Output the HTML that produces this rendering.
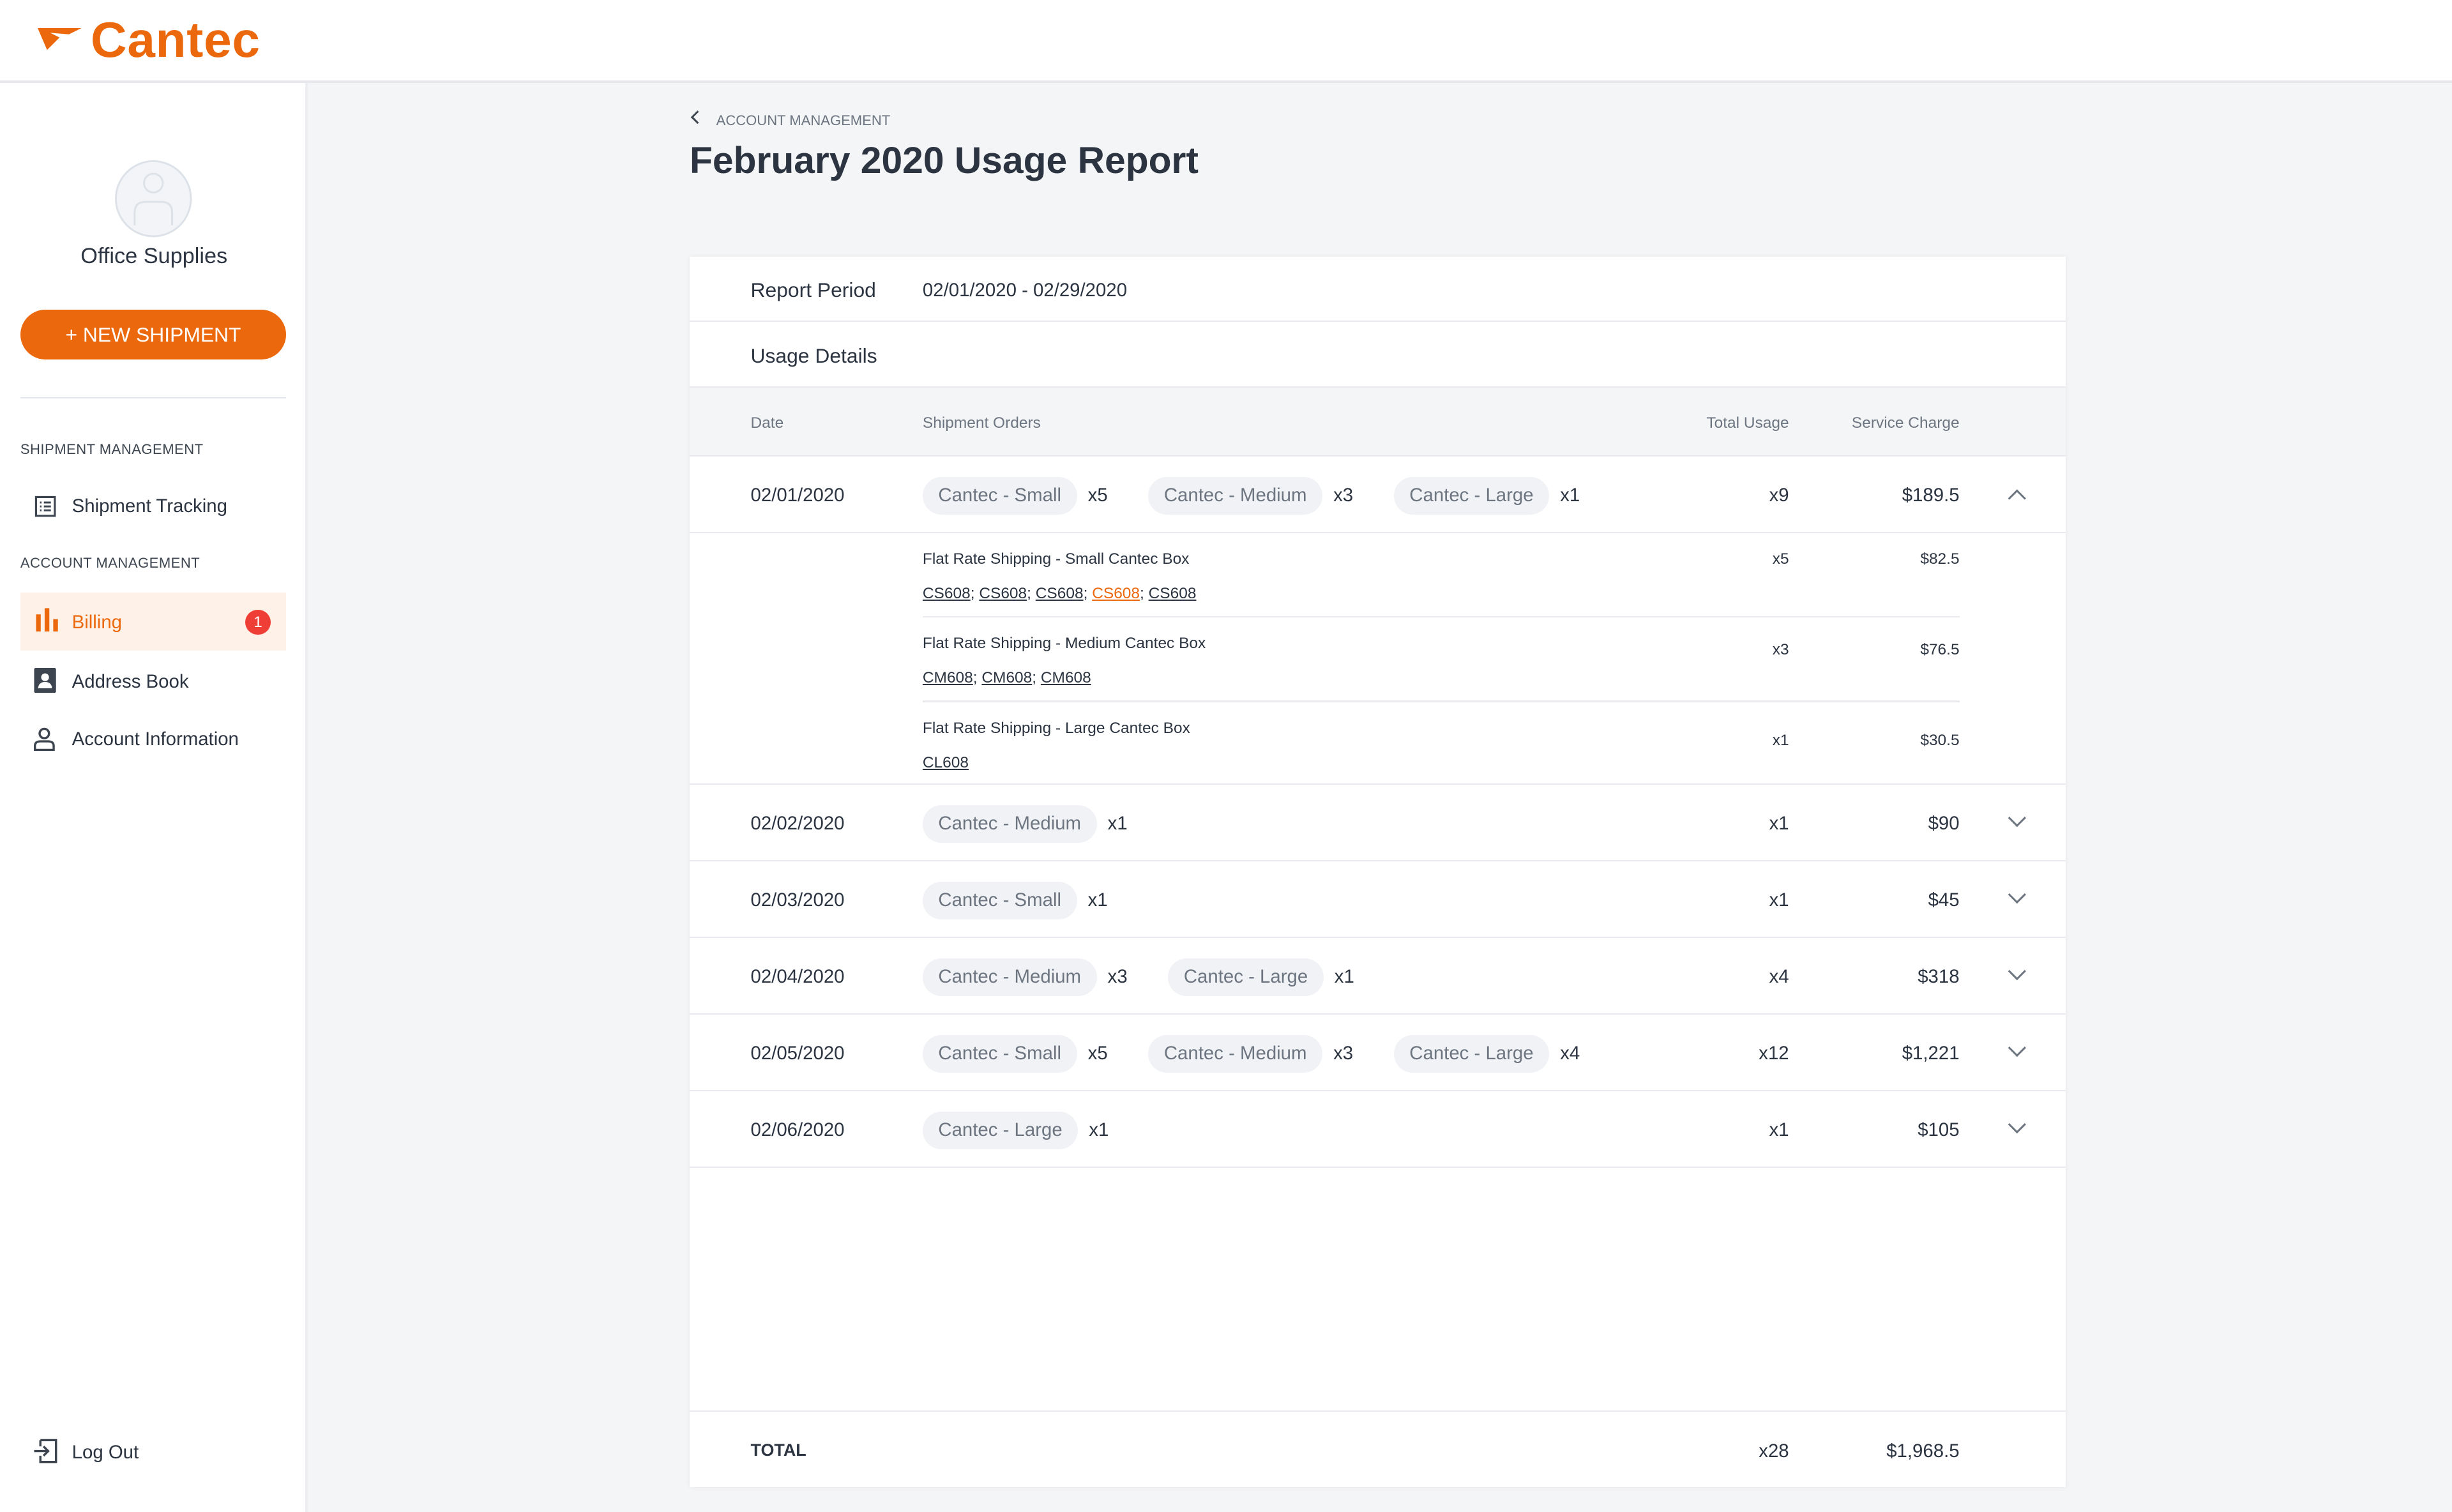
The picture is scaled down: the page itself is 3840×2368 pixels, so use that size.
<!DOCTYPE html>
<html><head><meta charset="utf-8"><style>
*{box-sizing:border-box;margin:0;padding:0}
html,body{width:3840px;height:2368px;overflow:hidden}
body{background:#f4f5f7;font-family:"Liberation Sans",sans-serif;color:#2b3440}
#root{zoom:2.449;width:1568px;height:967px;position:relative}
.hdr{position:absolute;left:0;top:0;width:1568px;height:53px;background:#fff;border-bottom:2px solid #e6e8ec}
.logo{position:absolute;left:58px;top:7px;font-size:32px;font-weight:bold;color:#ec680c;letter-spacing:0.3px}
.side{position:absolute;left:0;top:53px;width:197px;height:914px;background:#fff;border-right:2px solid #eceef1}
.abs{position:absolute}
.btn{left:13px;top:198px;width:170px;height:32px;border-radius:16px;background:#ec680c;color:#fff;font-size:13px;text-align:center;line-height:32px}
.sec{font-size:9px;color:#3d4650;left:13px;letter-spacing:.2px}
.nav{left:46px;font-size:12px;color:#2b3440}
.card{position:absolute;left:441px;top:164px;width:880px;height:787px;background:#fff;box-shadow:0 0 3px rgba(0,0,0,.06)}
.r{position:absolute;left:0;width:880px;border-bottom:1px solid #e8eaee}
.t{position:absolute;font-size:12px;white-space:nowrap}
.pill{display:inline-block;background:#f1f2f5;color:#6c7580;border-radius:12px;padding:0 10px;height:24px;line-height:24px;font-size:12px;margin-right:7px}
.q{display:inline-block;font-size:12px;margin-right:26px}
.rt{text-align:right}
.chev{position:absolute;left:845px;width:8px;height:8px;border-right:1.5px solid #6c7580;border-bottom:1.5px solid #6c7580;transform:rotate(45deg)}
.u{text-decoration:underline;font-size:10px}
.sm{font-size:10px}
</style></head><body><div id="root">
<div class="hdr">
<svg class="abs" style="left:24px;top:18px" width="30" height="16" viewBox="0 0 30 16"><path d="M0 0H28L20 4L8 3L14 6L6 14Z" fill="#ec680c"/></svg>
<div class="logo">Cantec</div></div>
<div class="side"></div>
<svg class="abs" style="left:73px;top:102px" width="50" height="50" viewBox="0 0 50 50"><circle cx="25" cy="25" r="24" fill="#f2f4f7" stroke="#dde2e8" stroke-width="1.2"/><circle cx="25" cy="15" r="6" fill="none" stroke="#dde2e8" stroke-width="1.2"/><path d="M13 42V34Q13 27 20 27H30Q37 27 37 34V42" fill="none" stroke="#dde2e8" stroke-width="1.2"/></svg>
<div class="abs" style="left:0;width:197px;top:156px;text-align:center;font-size:14px">Office Supplies</div>
<div class="abs btn">+ NEW SHIPMENT</div>
<div class="abs" style="left:13px;top:254px;width:170px;height:1px;background:#e3e6ea"></div>
<div class="abs sec" style="top:282px">SHIPMENT MANAGEMENT</div>
<svg class="abs" style="left:22px;top:317px" width="14" height="14" viewBox="0 0 14 14"><rect x="1" y="1" width="12" height="12" fill="none" stroke="#3d4650" stroke-width="1.3"/><path d="M3.5 4.5h1M6 4.5h4.5M3.5 7h1M6 7h4.5M3.5 9.5h1M6 9.5h4.5" stroke="#3d4650" stroke-width="1.2"/></svg>
<div class="abs nav" style="top:317px">Shipment Tracking</div>
<div class="abs sec" style="top:355px">ACCOUNT MANAGEMENT</div>
<div class="abs" style="left:13px;top:379px;width:170px;height:37px;background:#fdf1e8"></div>
<svg class="abs" style="left:22px;top:388px" width="16" height="16" viewBox="0 0 16 16"><rect x="1" y="5" width="3" height="11" fill="#ec680c"/><rect x="6.5" y="1" width="3" height="15" fill="#ec680c"/><rect x="12" y="8" width="3" height="8" fill="#ec680c"/></svg>
<div class="abs nav" style="top:391px;color:#ec680c">Billing</div>
<div class="abs" style="left:157px;top:390px;width:16px;height:16px;border-radius:8px;background:#ef3e36;color:#fff;font-size:10px;text-align:center;line-height:16px">1</div>
<svg class="abs" style="left:21px;top:427px" width="16" height="16" viewBox="0 0 16 16"><rect x="1" y="0" width="14" height="16" rx="1" fill="#3d4650"/><circle cx="8" cy="6" r="2.5" fill="#fff"/><path d="M3.5 13Q4 9 8 9Q12 9 12.5 13Z" fill="#fff"/></svg>
<div class="abs nav" style="top:429px">Address Book</div>
<svg class="abs" style="left:21px;top:465px" width="15" height="15" viewBox="0 0 15 15"><circle cx="7.5" cy="4" r="3" fill="none" stroke="#3d4650" stroke-width="1.4"/><path d="M1.5 14.5V12Q1.5 9 5 9H10Q13.5 9 13.5 12V14.5Z" fill="none" stroke="#3d4650" stroke-width="1.4"/></svg>
<div class="abs nav" style="top:466px">Account Information</div>
<svg class="abs" style="left:21px;top:920px" width="16" height="16" viewBox="0 0 16 16"><path d="M5 1H15V15H5V11M5 5V1" fill="none" stroke="#3d4650" stroke-width="1.4"/><path d="M1 8H10M7 5L10 8L7 11" fill="none" stroke="#3d4650" stroke-width="1.4"/></svg>
<div class="abs nav" style="top:922px">Log Out</div>

<div class="abs" style="left:443px;top:72px;width:6px;height:6px;border-left:1.5px solid #3d4650;border-bottom:1.5px solid #3d4650;transform:rotate(45deg)"></div>
<div class="abs" style="left:458px;top:72px;font-size:9px;color:#6c7580">ACCOUNT MANAGEMENT</div>
<div class="abs" style="left:441px;top:89px;font-size:24px;font-weight:bold;color:#2b3440">February 2020 Usage Report</div>

<div class="card">
<div class="r" style="top:0;height:42px"><div class="t" style="left:39px;top:14px;font-size:13px">Report Period</div><div class="t" style="left:149px;top:15px">02/01/2020 - 02/29/2020</div></div>
<div class="r" style="top:42px;height:42px"><div class="t" style="left:39px;top:14px;font-size:13px">Usage Details</div></div>
<div class="r" style="top:84px;height:44px;background:#f4f5f7"><div class="t sm" style="left:39px;top:17px;color:#6c7580">Date</div><div class="t sm" style="left:149px;top:17px;color:#6c7580">Shipment Orders</div><div class="t sm rt" style="right:177px;top:17px;color:#6c7580">Total Usage</div><div class="t sm rt" style="right:68px;top:17px;color:#6c7580">Service Charge</div></div>

<div class="r" style="top:128px;height:49px">
<div class="t" style="left:39px;top:18px">02/01/2020</div>
<div class="t" style="left:149px;top:13px"><span class="pill">Cantec - Small</span><span class="q">x5</span><span class="pill">Cantec - Medium</span><span class="q">x3</span><span class="pill">Cantec - Large</span><span class="q">x1</span></div>
<div class="t rt" style="right:177px;top:18px">x9</div><div class="t rt" style="right:68px;top:18px">$189.5</div>
<div class="chev" style="top:23px;transform:rotate(-135deg)"></div></div>

<div class="r" style="top:177px;height:161px">
<div class="t sm" style="left:149px;top:11px">Flat Rate Shipping - Small Cantec Box</div>
<div class="t" style="left:149px;top:31px"><span class="u">CS608</span><span class="sm">; </span><span class="u">CS608</span><span class="sm">; </span><span class="u">CS608</span><span class="sm">; </span><span class="u" style="color:#ec680c">CS608</span><span class="sm">; </span><span class="u">CS608</span></div>
<div class="t sm rt" style="right:177px;top:11px">x5</div><div class="t sm rt" style="right:68px;top:11px">$82.5</div>
<div class="abs" style="left:149px;top:53px;width:663px;height:1px;background:#e8eaee"></div>
<div class="t sm" style="left:149px;top:65px">Flat Rate Shipping - Medium Cantec Box</div>
<div class="t" style="left:149px;top:85px"><span class="u">CM608</span><span class="sm">; </span><span class="u">CM608</span><span class="sm">; </span><span class="u">CM608</span></div>
<div class="t sm rt" style="right:177px;top:69px">x3</div><div class="t sm rt" style="right:68px;top:69px">$76.5</div>
<div class="abs" style="left:149px;top:107px;width:663px;height:1px;background:#e8eaee"></div>
<div class="t sm" style="left:149px;top:119px">Flat Rate Shipping - Large Cantec Box</div>
<div class="t" style="left:149px;top:139px"><span class="u">CL608</span></div>
<div class="t sm rt" style="right:177px;top:127px">x1</div><div class="t sm rt" style="right:68px;top:127px">$30.5</div>
</div>

<div class="r" style="top:338px;height:49px"><div class="t" style="left:39px;top:18px">02/02/2020</div><div class="t" style="left:149px;top:13px"><span class="pill">Cantec - Medium</span><span class="q">x1</span></div><div class="t rt" style="right:177px;top:18px">x1</div><div class="t rt" style="right:68px;top:18px">$90</div><div class="chev" style="top:17px"></div></div>
<div class="r" style="top:387px;height:49px"><div class="t" style="left:39px;top:18px">02/03/2020</div><div class="t" style="left:149px;top:13px"><span class="pill">Cantec - Small</span><span class="q">x1</span></div><div class="t rt" style="right:177px;top:18px">x1</div><div class="t rt" style="right:68px;top:18px">$45</div><div class="chev" style="top:17px"></div></div>
<div class="r" style="top:436px;height:49px"><div class="t" style="left:39px;top:18px">02/04/2020</div><div class="t" style="left:149px;top:13px"><span class="pill">Cantec - Medium</span><span class="q">x3</span><span class="pill">Cantec - Large</span><span class="q">x1</span></div><div class="t rt" style="right:177px;top:18px">x4</div><div class="t rt" style="right:68px;top:18px">$318</div><div class="chev" style="top:17px"></div></div>
<div class="r" style="top:485px;height:49px"><div class="t" style="left:39px;top:18px">02/05/2020</div><div class="t" style="left:149px;top:13px"><span class="pill">Cantec - Small</span><span class="q">x5</span><span class="pill">Cantec - Medium</span><span class="q">x3</span><span class="pill">Cantec - Large</span><span class="q">x4</span></div><div class="t rt" style="right:177px;top:18px">x12</div><div class="t rt" style="right:68px;top:18px">$1,221</div><div class="chev" style="top:17px"></div></div>
<div class="r" style="top:534px;height:49px"><div class="t" style="left:39px;top:18px">02/06/2020</div><div class="t" style="left:149px;top:13px"><span class="pill">Cantec - Large</span><span class="q">x1</span></div><div class="t rt" style="right:177px;top:18px">x1</div><div class="t rt" style="right:68px;top:18px">$105</div><div class="chev" style="top:17px"></div></div>

<div class="abs" style="left:0;top:738px;width:880px;height:1px;background:#e8eaee"></div>
<div class="t" style="left:39px;top:757px;font-size:11px;font-weight:bold">TOTAL</div>
<div class="t rt" style="right:177px;top:757px">x28</div><div class="t rt" style="right:68px;top:757px">$1,968.5</div>
</div>
</div></body></html>
